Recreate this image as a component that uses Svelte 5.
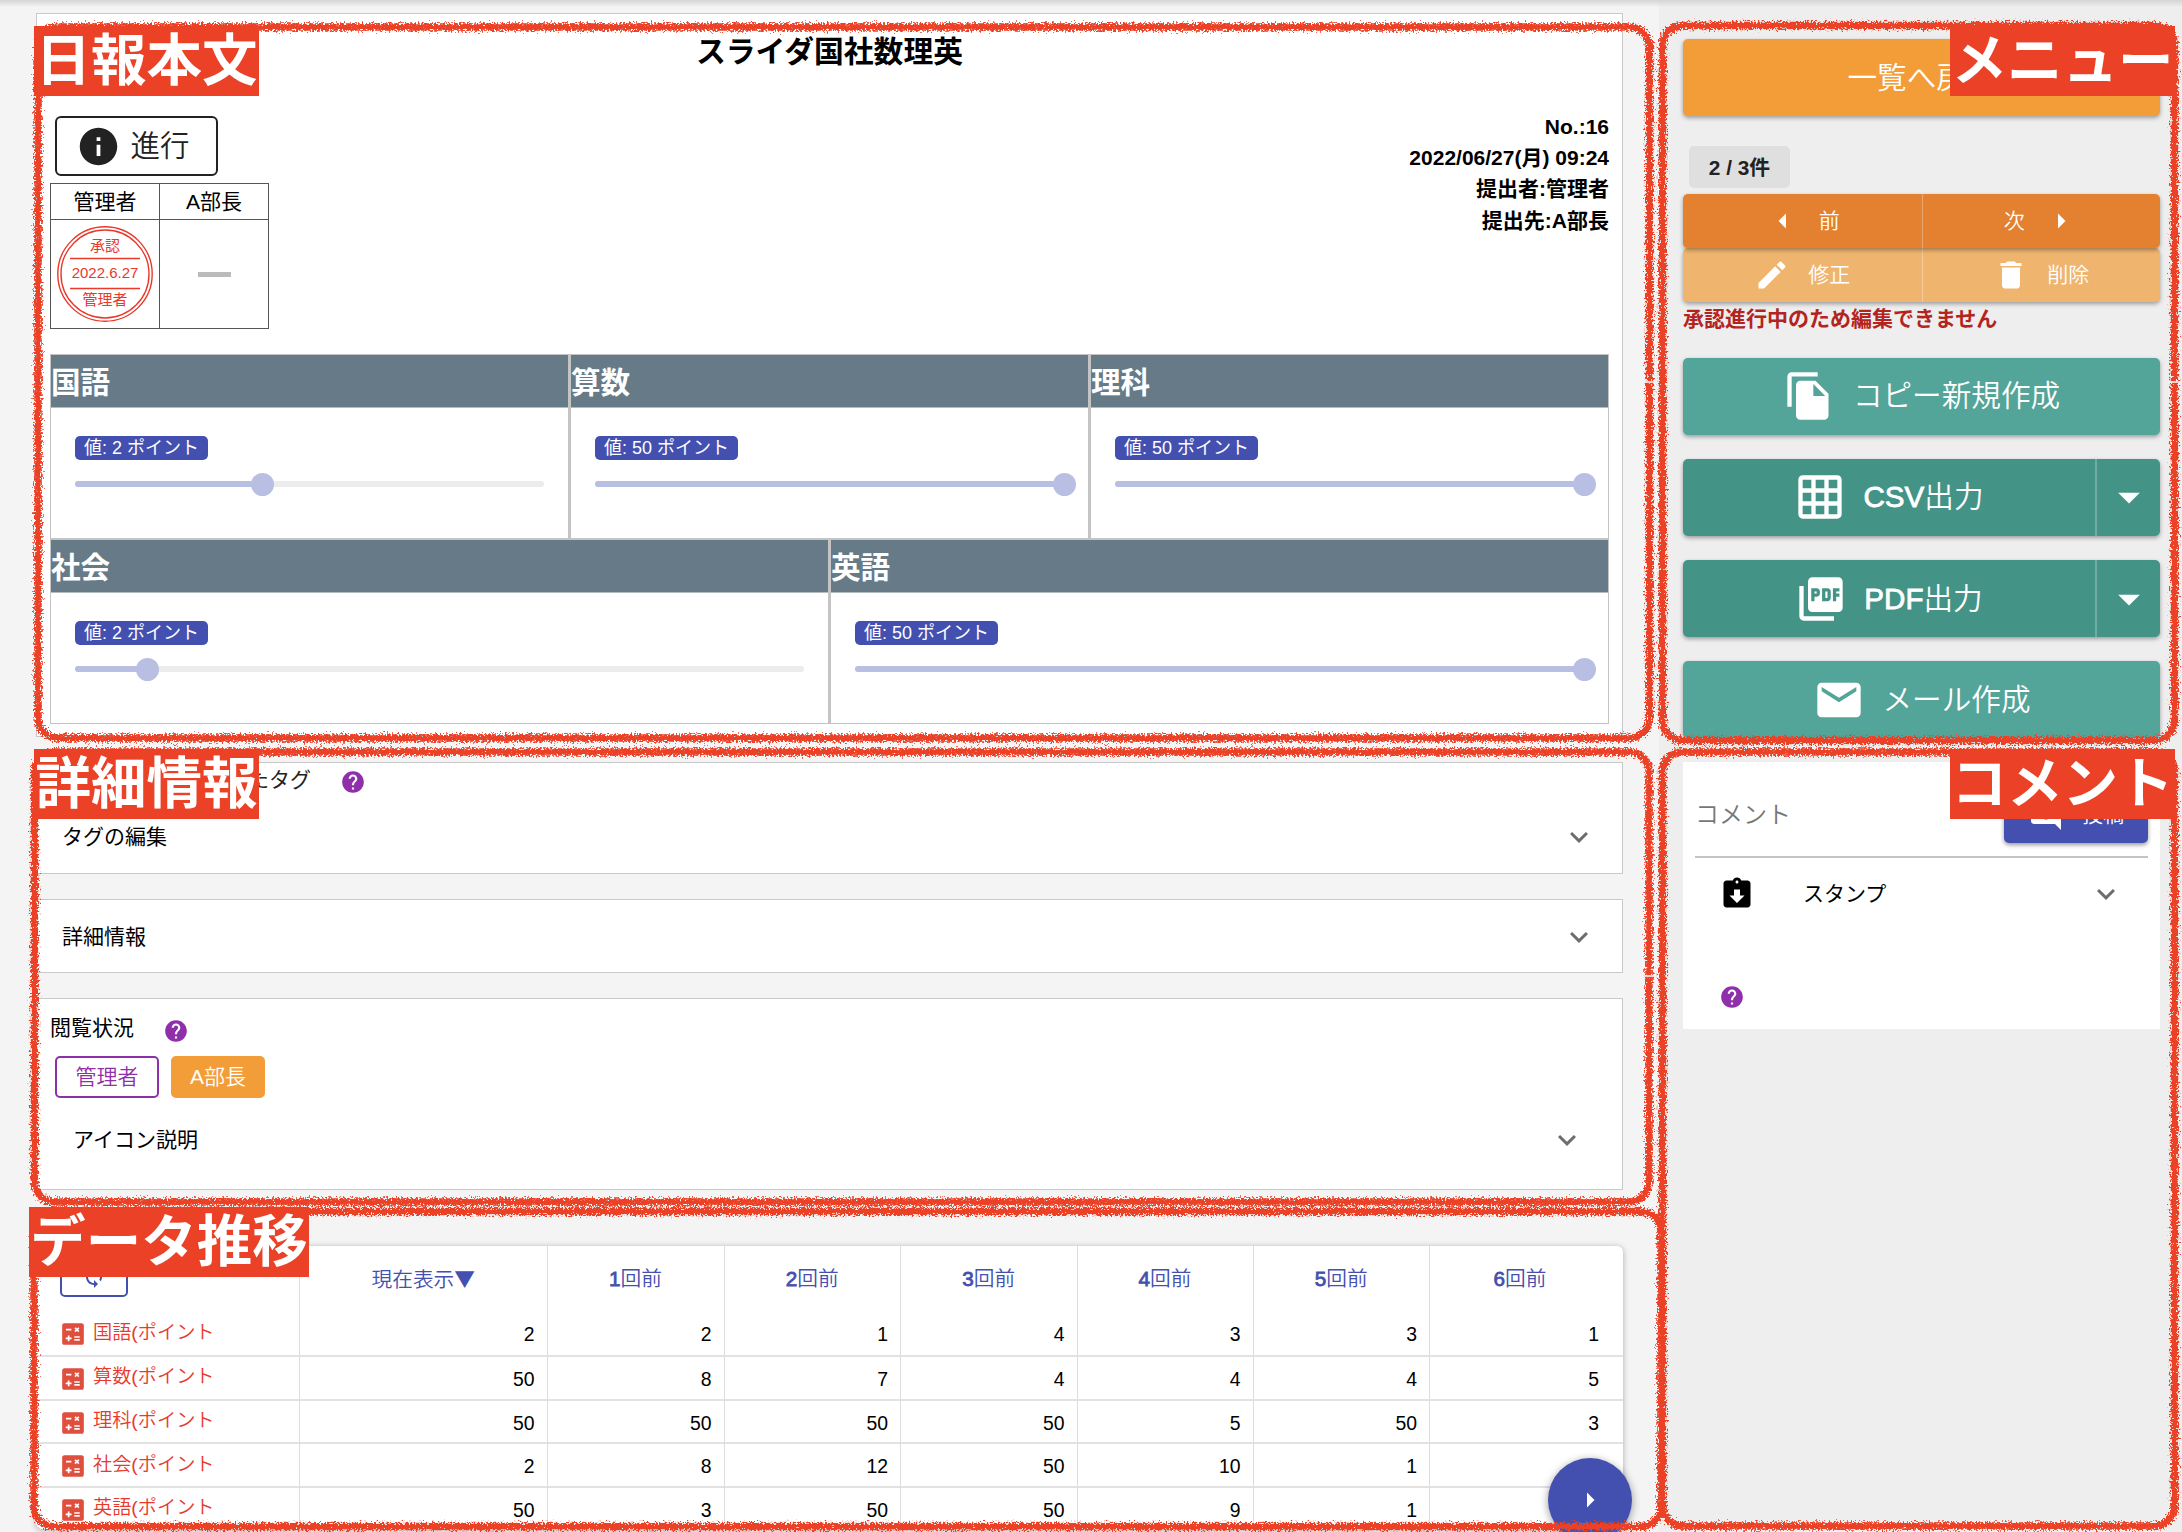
<script>
  const icons = {
    info: 'M12 2C6.48 2 2 6.48 2 12s4.48 10 10 10 10-4.48 10-10S17.52 2 12 2zm1 15h-2v-6h2v6zm0-8h-2V7h2v2z',
    help: 'M12 2C6.48 2 2 6.48 2 12s4.48 10 10 10 10-4.48 10-10S17.52 2 12 2zm1 17h-2v-2h2v2zm2.07-7.75l-.9.92C13.45 12.9 13 13.5 13 15h-2v-.5c0-1.1.45-2.1 1.17-2.83l1.24-1.26c.37-.36.59-.86.59-1.41 0-1.1-.9-2-2-2s-2 .9-2 2H8c0-2.21 1.79-4 4-4s4 1.79 4 4c0 .88-.36 1.68-.93 2.25z',
    edit: 'M3 17.25V21h3.75L17.81 9.94l-3.75-3.75L3 17.25zM20.71 7.04c.39-.39.39-1.02 0-1.41l-2.34-2.34c-.39-.39-1.02-.39-1.41 0l-1.83 1.83 3.75 3.75 1.83-1.83z',
    trash: 'M6 19c0 1.1.9 2 2 2h8c1.1 0 2-.9 2-2V7H6v12zM19 4h-3.5l-1-1h-5l-1 1H5v2h14V4z',
    copy: 'M16 1H4c-1.1 0-2 .9-2 2v14h2V3h12V1zm-1 4l6 6v10c0 1.1-.9 2-2 2H7.99C6.89 23 6 22.1 6 21l.01-14c0-1.1.89-2 1.99-2h7zm-1 7h5.5L14 6.5V12z',
    grid: 'M20 2H4c-1.1 0-2 .9-2 2v16c0 1.1.9 2 2 2h16c1.1 0 2-.9 2-2V4c0-1.1-.9-2-2-2zM8 20H4v-4h4v4zm0-6H4v-4h4v4zm0-6H4V4h4v4zm6 12h-4v-4h4v4zm0-6h-4v-4h4v4zm0-6h-4V4h4v4zm6 12h-4v-4h4v4zm0-6h-4v-4h4v4zm0-6h-4V4h4v4z',
    pdf: 'M20 2H8c-1.1 0-2 .9-2 2v12c0 1.1.9 2 2 2h12c1.1 0 2-.9 2-2V4c0-1.1-.9-2-2-2zm-8.5 7.5c0 .83-.67 1.5-1.5 1.5H9v2H7.5V7H10c.83 0 1.5.67 1.5 1.5v1zm5 2c0 .83-.67 1.5-1.5 1.5h-2.5V7H15c.83 0 1.5.67 1.5 1.5v3zm4-3H19v1h1.5V11H19v2h-1.5V7h3v1.5zM9 9.5h1v-1H9v1zM4 6H2v14c0 1.1.9 2 2 2h14v-2H4V6zm10 5.5h1v-3h-1v3z',
    mail: 'M20 4H4c-1.1 0-1.99.9-1.99 2L2 18c0 1.1.9 2 2 2h16c1.1 0 2-.9 2-2V6c0-1.1-.9-2-2-2zm0 4l-8 5-8-5V6l8 5 8-5v2z',
    down: 'M7 10l5 5 5-5z',
    left: 'M14 7l-5 5 5 5V7z',
    right: 'M10 17l5-5-5-5v10z',
    expand: 'M16.59 8.59L12 13.17 7.41 8.59 6 10l6 6 6-6z',
    stamp: 'M19 3h-4.18C14.4 1.84 13.3 1 12 1c-1.3 0-2.4.84-2.82 2H5c-1.1 0-2 .9-2 2v14c0 1.1.9 2 2 2h14c1.1 0 2-.9 2-2V5c0-1.1-.9-2-2-2zm-7 0c.55 0 1 .45 1 1s-.45 1-1 1-1-.45-1-1 .45-1 1-1zm0 15l-5-5h3V9h4v4h3l-5 5z',
    loop: 'M12 4V1L8 5l4 4V6c3.31 0 6 2.69 6 6 0 1.01-.25 1.97-.7 2.8l1.46 1.46C19.54 15.03 20 13.57 20 12c0-4.42-3.58-8-8-8zm0 14c-3.31 0-6-2.69-6-6 0-1.01.25-1.97.7-2.8L5.24 7.74C4.46 8.97 4 10.43 4 12c0 4.42 3.58 8 8 8v3l4-4-4-4v3z',
    post: 'M22 4c0-1.1-.9-2-2-2H4c-1.1 0-2 .9-2 2v12c0 1.1.9 2 2 2h14l4 4V4zm-5 7h-4v4h-2v-4H7V9h4V5h2v4h4v2z',
    calc: 'M4 2h16c1.1 0 2 .9 2 2v16c0 1.1-.9 2-2 2H4c-1.1 0-2-.9-2-2V4c0-1.1.9-2 2-2zM5.500 7.200v1.600h5V7.200zM5.300 15.200v1.600h1.900v1.900h1.600v-1.900h1.900v-1.600H8.800v-1.900H7.200v1.900zM13.200 14v1.500h5V14zM13.200 16.700v1.500h5v-1.500zM13.300 6.800l1.200 1.200-1.200 1.200 1.100 1.100 1.200-1.200 1.200 1.200 1.100-1.100-1.200-1.200 1.200-1.200-1.100-1.100-1.200 1.200-1.200-1.200z'
  };

  const rows = [
    [{ name: '国語', value: 2, pct: 40 }, { name: '算数', value: 50, pct: 100 }, { name: '理科', value: 50, pct: 100 }],
    [{ name: '社会', value: 2, pct: 10 }, { name: '英語', value: 50, pct: 100 }]
  ];

  const past = [1, 2, 3, 4, 5, 6];
  const history = [
    ['国語', 2, 2, 1, 4, 3, 3, 1],
    ['算数', 50, 8, 7, 4, 4, 4, 5],
    ['理科', 50, 50, 50, 50, 5, 50, 3],
    ['社会', 2, 8, 12, 50, 10, 1, ''],
    ['英語', 50, 3, 50, 50, 9, 1, '']
  ];

  // Hand-drawn marker frames: x, y, width, height
  const frames = [
    [38, 27, 1611.5, 711],
    [34.5, 752, 1614.5, 450],
    [34, 1211.5, 1627, 315],
    [1662.5, 25.5, 512, 715],
    [1662.5, 752, 512, 774]
  ];
</script>

{#snippet icon(name, cls)}
  <svg class={cls} viewBox="0 0 24 24" aria-hidden="true"><path fill="currentColor" fill-rule="evenodd" d={icons[name]} /></svg>
{/snippet}

<div class="page">
  <main>
    <section class="card report">
      <h1>スライダ国社数理英</h1>
      <div class="info">
        <div class="status">
          <button class="progress">{@render icon('info', 'i45')}<span>進行</span></button>
          <div class="approval">
            <div class="who">管理者</div>
            <div class="who">A部長</div>
            <div class="seal">
              <svg viewBox="0 0 98 98" width="98" height="98">
                <g fill="none" stroke="#e8392b">
                  <circle cx="49" cy="49" r="47.2" stroke-width="1.4" />
                  <circle cx="49" cy="49" r="44" stroke-width="1.4" />
                  <path d="M14 33.500h70M14 63.500h70" stroke-width="1.500" />
                </g>
                <g fill="#e8392b" text-anchor="middle">
                  <text x="49" y="25.500">承認</text>
                  <text x="49" y="53">2022.6.27</text>
                  <text x="49" y="79.500">管理者</text>
                </g>
              </svg>
            </div>
            <div class="seal"><i class="none"></i></div>
          </div>
        </div>
        <div class="meta">
          <div>No.:16</div>
          <div>2022/06/27(月) 09:24</div>
          <div>提出者:管理者</div>
          <div>提出先:A部長</div>
        </div>
      </div>
      {#each rows as row}
        <div class="fields">
          {#each row as f}
            <div class="field">
              <h2>{f.name}</h2>
              <div class="body">
                <span class="badge">値: {f.value} ポイント</span>
                <div class="track">
                  <div class="fill" style="width:{f.pct}%"><i class="thumb"></i></div>
                </div>
              </div>
            </div>
          {/each}
        </div>
      {/each}
    </section>

    <section class="card tags">
      <div class="tagline"><span class="tagname">この日報に設定されたタグ</span>{@render icon('help', 'i26')}</div>
      <div class="panel"><span>タグの編集</span>{@render icon('expand', 'i36')}</div>
    </section>

    <section class="card detail">
      <div class="panel"><span>詳細情報</span>{@render icon('expand', 'i36')}</div>
    </section>

    <section class="card views">
      <div class="viewhead"><span>閲覧状況</span>{@render icon('help', 'i26')}</div>
      <div class="chips"><span class="chip unread">管理者</span><span class="chip read">A部長</span></div>
      <div class="panel legend"><span>アイコン説明</span>{@render icon('expand', 'i36')}</div>
    </section>

    <section class="history">
      <div class="tr th">
        <div class="td first"><button class="reload">{@render icon('loop', 'i24')}</button></div>
        <div class="td"><span>現在表示<span class="sort">▼</span></span></div>
        {#each past as n}<div class="td"><span><b>{n}</b>回前</span></div>{/each}
      </div>
      {#each history as r}
        <div class="tr">
          {#each r as c, i}
            {#if i === 0}
              <div class="td first">{@render icon('calc', 'i26')}<span>{c}(ポイント</span></div>
            {:else}
              <div class="td num">{c}</div>
            {/if}
          {/each}
        </div>
      {/each}
    </section>
  </main>

  <aside>
    <button class="btn back">一覧へ戻る</button>
    <div class="count">2 / 3件</div>
    <div class="pair nav">
      <button>{@render icon('left', 'i36')}<span>前</span></button>
      <button><span>次</span>{@render icon('right', 'i36')}</button>
    </div>
    <div class="pair edit">
      <button>{@render icon('edit', 'i36')}<span>修正</span></button>
      <button>{@render icon('trash', 'i36')}<span>削除</span></button>
    </div>
    <p class="warn">承認進行中のため編集できません</p>
    <div class="actions">
      <button class="btn teal">{@render icon('copy', 'i52')}<span>コピー新規作成</span></button>
      <div class="split">
        <button class="btn">{@render icon('grid', 'i52')}<span><b>CSV</b>出力</span></button>
        <button class="btn more">{@render icon('down', 'i52')}</button>
      </div>
      <div class="split">
        <button class="btn">{@render icon('pdf', 'i52')}<span><b>PDF</b>出力</span></button>
        <button class="btn more">{@render icon('down', 'i52')}</button>
      </div>
      <button class="btn teal">{@render icon('mail', 'i52')}<span>メール作成</span></button>
    </div>
    <section class="comment">
      <div class="entry">
        <span>コメント</span>
        <button class="send">{@render icon('post', 'i36')}<span>投稿</span></button>
      </div>
      <div class="stamp">
        {@render icon('stamp', 'i36')}<span>スタンプ</span>{@render icon('expand', 'i36 grey')}
      </div>
      <div class="tip">{@render icon('help', 'i26')}</div>
    </section>
  </aside>

  <button class="fab">{@render icon('right', 'i36')}</button>

  <svg class="marks" width="2182" height="1532" viewBox="0 0 2182 1532" aria-hidden="true">
    <filter id="crayon" filterUnits="userSpaceOnUse" x="0" y="0" width="2182" height="1532" color-interpolation-filters="sRGB">
      <feTurbulence type="fractalNoise" baseFrequency="0.55" numOctaves="2" seed="4" result="n" />
      <feDisplacementMap in="SourceGraphic" in2="n" scale="10" xChannelSelector="R" yChannelSelector="G" />
    </filter>
    <g fill="none" stroke="#ea4127" stroke-width="7.500" filter="url(#crayon)">
      {#each frames as [x, y, w, h]}
        <rect {x} {y} width={w} height={h} rx="20" />
      {/each}
    </g>
    <path d="M1643 382h13M2168 382h13M1643 976h13" stroke="#f4f4f4" stroke-width="2" opacity="0.8" />
  </svg>
  <div class="label l1">日報本文</div>
  <div class="label l2">詳細情報</div>
  <div class="label l3">データ推移</div>
  <div class="label l4">メニュー</div>
  <div class="label l5">コメント</div>
</div>

<style>
  :global(body) { margin: 0; }
  .page {
    position: relative;
    display: grid;
    grid-template-columns: 1659px 523px;
    width: 2182px;
    height: 1532px;
    overflow: hidden;
    background: #f4f4f4;
    color: #000;
    font-family: 'Liberation Sans', 'Noto Sans CJK JP', sans-serif;
    font-size: 21px;
    line-height: 30px;
  }
  .page::before {
    content: '';
    position: absolute;
    inset: 0 0 auto 0;
    height: 7px;
    background: linear-gradient(#d4d4d4, rgba(230, 230, 230, 0));
  }
  button {
    display: flex;
    align-items: center;
    justify-content: center;
    gap: 18px;
    padding: 0;
    border: 0;
    box-sizing: border-box;
    background: none;
    color: inherit;
    font: inherit;
    font-weight: 350;
  }
  svg { display: block; flex: none; }
  .i24 { width: 24px; height: 24px; }
  .i26 { width: 26px; height: 26px; }
  .i36 { width: 36px; height: 36px; }
  .i45 { width: 45px; height: 45px; }
  .i52 { width: 52px; height: 52px; }
  main { padding: 13px 0 0 36px; }
  .card {
    box-sizing: border-box;
    width: 1587px;
    margin-bottom: 25px;
    border: 1px solid #c9c9c9;
    background: #fff;
  }
  .report { height: 724px; padding: 17px 13px 0; }
  h1 { margin: 0; text-align: center; font-size: 29.800px; line-height: 42px; height: 40px; }
  .info { display: flex; justify-content: space-between; height: 243px; padding-top: 40px; }
  .progress {
    width: 163px;
    height: 60px;
    margin: 5px 0 7px 5px;
    padding-right: 7px;
    gap: 9px;
    border: 2px solid #222;
    border-radius: 6px;
    font-size: 29.500px;
    color: #222;
  }
  .approval {
    display: grid;
    grid-template-columns: 108px 108px;
    grid-template-rows: 35px 108px;
    gap: 1px;
    width: max-content;
    padding: 1px;
    background: #555;
  }
  .approval > div { display: flex; align-items: center; justify-content: center; background: #fff; }
  .seal text { font-size: 15px; }
  .none { width: 33px; height: 5px; background: #bbb; }
  .meta { text-align: right; font-weight: 700; font-size: 21px; line-height: 31.200px; }
  .fields { display: flex; width: 1559px; height: 185px; }
  .field { flex: 1; border: 1px solid #c4c4c4; box-sizing: border-box; }
  .field + .field { border-left-width: 2px; }
  h2 {
    margin: 0;
    height: 53px;
    border-bottom: 1px solid #b5bcc0;
    box-sizing: border-box;
    background: #667b87;
    color: #fff;
    font-size: 29.600px;
    line-height: 55px;
  }
  .body { display: flex; flex-direction: column; align-items: flex-start; padding: 28px 24px 0; }
  .badge {
    height: 24px;
    padding: 0 9px;
    border-radius: 5px;
    background: #4350af;
    color: #fff;
    font-size: 18px;
    line-height: 25px;
  }
  .track { width: 100%; height: 6px; margin-top: 21px; border-radius: 3px; background: #ececec; }
  .fill { position: relative; height: 6px; border-radius: 3px; background: #b9bfe2; }
  .thumb {
    position: absolute;
    right: -11.500px;
    top: -8.500px;
    width: 23px;
    height: 23px;
    border-radius: 50%;
    background: #b9bfe2;
  }
  .tags { height: 112px; }
  .tagline { display: flex; align-items: center; gap: 30px; height: 34px; color: #222; }
  .tagname { width: 274px; margin-right: -1px; text-align: right; }
  .tagline .i26, .viewhead .i26, .tip .i26 { color: #8f2fa9; margin-top: 4px; }
  .panel { display: flex; align-items: center; justify-content: space-between; height: 73px; padding: 0 25px 0 25px; }
  .tags .panel { height: 80px; }
  .panel svg, .grey { color: #6d6d6d; }
  .detail { height: 74px; }
  .views { height: 192px; }
  .viewhead { display: flex; gap: 30px; padding: 14px 0 0 13px; height: 31px; }
  .viewhead .i26 { margin-top: 5px; margin-left: -1px; }
  .chips { display: flex; gap: 12px; padding: 12px 18px 0; }
  .chip {
    display: flex;
    align-items: center;
    box-sizing: border-box;
    height: 42px;
    padding: 0 18.500px;
    border: 2px solid #8f2fa9;
    border-radius: 5px;
    font-weight: 350;
    color: #8f2fa9;
  }
  .read { padding: 0 17px; border-color: #f29d38; background: #f29d38; color: #fff; }
  .views .legend { height: 84px; padding: 0 37px 0 36px; }
  .history {
    width: 1587px;
    height: 283px;
    margin-top: 56px;
    border-radius: 6px;
    background: #fff;
    box-shadow: 0 1px 6px rgba(0, 0, 0, 0.3);
    overflow: hidden;
  }
  .tr {
    display: grid;
    grid-template-columns: 264px 247.500px 177px 176.500px 176.500px 176px 176.500px 193px;
    height: 43.700px;
  }
  .tr + .tr + .tr .td { border-top: 2px solid #e2e2e2; }
  .td {
    display: flex;
    align-items: center;
    box-sizing: border-box;
    border-right: 1px solid #ddd;
    font-size: 19.400px;
  }
  .num { justify-content: flex-end; padding: 2px 12px 0 0; }
  .num:last-child { padding-right: 24px; border-right: 0; }
  .first { padding-left: 24px; gap: 7px; color: #e8392b; font-weight: 350; font-size: 19.200px; }
  .first .i26 { color: #e04f3e; margin-top: 2px; }
  .first span { margin-top: -1px; }
  .th { height: 65.300px; color: #4350af; }
  .th .td { justify-content: center; font-size: 20.700px; font-weight: 350; padding-top: 1px; }
  .th .td:last-child { border-right: 0; padding-right: 13px; }
  .th b { font-weight: 400; -webkit-text-stroke: 0.800px #4350af; }
  .sort { font-family: 'Noto Sans CJK JP', sans-serif; }
  .th .first { justify-content: flex-start; align-items: flex-end; padding-bottom: 14px; }
  .reload { width: 68px; height: 40px; border: 2px solid #4350af; border-radius: 5px; color: #4350af; }
  aside { padding: 39px 0 0 24px; background: #eee; }
  .btn, .pair, .split {
    width: 477px;
    border-radius: 5px;
    box-shadow: 0 2px 4px rgba(0, 0, 0, 0.35);
    color: #fff;
  }
  .btn { height: 77px; font-size: 29.600px; line-height: 40px; }
  .back { background: #f29d38; }
  .count {
    width: 101px;
    height: 42px;
    margin: 30px 0 6px 6px;
    border-radius: 5px;
    background: #dfdfdf;
    color: #222;
    text-align: center;
    font-weight: 700;
    font-size: 20.800px;
    line-height: 43px;
  }
  .pair { position: relative; display: grid; grid-template-columns: 1fr 1fr; height: 54px; }
  .pair button + button { border-left: 1px solid rgba(255, 255, 255, 0.3); }
  .nav { z-index: 1; background: #e38130; }
  .edit { background: #efb46e; }
  .warn { margin: 1px 0 24.500px; color: #b3241f; font-weight: 700; font-size: 21px; line-height: 31px; height: 30px; }
  .actions { display: grid; gap: 24.300px; }
  .teal { background: #53a499; }
  .split { display: flex; background: #439487; }
  .split .btn { flex: 1; box-shadow: none; border-radius: 0; gap: 17px; }
  .split .more { flex: 0 0 65px; border-left: 2px solid #6fada2; }
  .split b { font-weight: 400; -webkit-text-stroke: 0.800px #fff; }
  .comment { box-sizing: border-box; width: 477px; height: 267px; margin-top: 24px; padding: 25px 12px 0; background: #fff; }
  .entry { display: flex; justify-content: space-between; height: 69px; border-bottom: 2px solid #c4c4c4; }
  .entry > span { padding: 13px 0 0 0; color: #777; font-size: 24px; font-weight: 350; }
  .send { width: 144px; height: 56px; border-radius: 5px; background: #4350af; color: #fff; box-shadow: 0 2px 4px rgba(0, 0, 0, 0.4); }
  .stamp { display: flex; align-items: center; height: 72px; padding: 0 24px; }
  .stamp span { flex: 1; margin-left: 48px; }
  .tip { padding: 54px 0 0 24px; }
  .tip .i26 { margin-top: 0; }
  .fab {
    position: absolute;
    left: 1548px;
    top: 1458px;
    width: 84px;
    height: 84px;
    border-radius: 50%;
    background: #4350af;
    color: #fff;
    box-shadow: 0 2px 8px rgba(0, 0, 0, 0.4);
  }
  .marks { position: absolute; inset: 0; z-index: 2; }
  .label {
    position: absolute;
    z-index: 3;
    width: 225px;
    height: 70px;
    background: #ea4127;
    color: #fff;
    text-align: center;
    white-space: nowrap;
    font-size: 55.500px;
    font-weight: 700;
    line-height: 71px;
  }
  .l1 { left: 34px; top: 26px; }
  .l2 { left: 34px; top: 749px; }
  .l3 { left: 29px; top: 1207px; width: 280px; }
  .l4 { left: 1950px; top: 26px; }
  .l5 { left: 1950px; top: 749px; }
</style>
